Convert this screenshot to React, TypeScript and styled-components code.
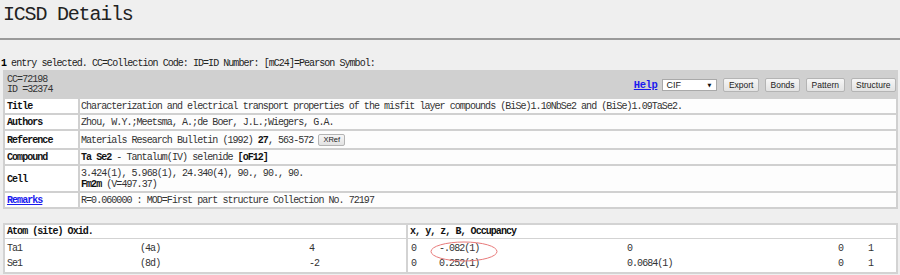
import React from 'react';
import styled, { createGlobalStyle } from 'styled-components';

const GlobalStyle = createGlobalStyle`
  body {
    margin: 0;
    background: #efefef;
    color: #2a2a2a;
    font-family: 'Liberation Mono', 'DejaVu Sans Mono', monospace;
    font-size: 10px;
    letter-spacing: -0.95px;
  }
`;

const PageTitle = styled.h1`
  margin: 0;
  height: 38px;
  box-sizing: border-box;
  padding: 4px 3px 0;
  font-size: 20px;
  line-height: 22px;
  font-weight: normal;
  letter-spacing: -1.2px;
  color: #222;
`;

const Rule = styled.div`
  height: 2px;
  background: #9a9a9a;
`;

const Summary = styled.div`
  margin: 18px 1px 0;
  line-height: 12px;
  height: 12px;
  color: #222;

  b {
    color: #000;
  }
`;

const Panel = styled.div`
  margin: 0 2px 0 3px;
  display: grid;
  grid-template-columns: 73px 1fr;
  gap: 2px;
  padding: 2px;
  background: #d0d0d0;
`;

const PanelHeader = styled.div`
  grid-column: 1 / -1;
  height: 25px;
  display: flex;
  align-items: center;
  justify-content: space-between;
  padding-left: 2px;
`;

const IdBlock = styled.div`
  line-height: 10px;
  color: #333;
`;

const Toolbar = styled.div`
  display: flex;
  align-items: center;
  gap: 6px;
  padding-top: 1px;
`;

const HelpLink = styled.a`
  color: #1a1aee;
  font-weight: bold;
  font-size: 10.5px;
  letter-spacing: -0.4px;
  text-decoration: underline;
  margin-right: -1px;
`;

const FormatSelect = styled.span`
  position: relative;
  display: inline-block;
  width: 55px;
  height: 12px;
  box-sizing: border-box;
  border: 1px solid #a9a9a9;
  background: #fff;

  select {
    appearance: none;
    border: none;
    background: transparent;
    width: 100%;
    height: 100%;
    padding: 0 0 0 3px;
    margin: 0;
    font-family: 'Liberation Sans', Arial, sans-serif;
    font-size: 9px;
    line-height: 10px;
    letter-spacing: 0;
    color: #222;
    outline: none;
  }

  &::after {
    content: '▼';
    position: absolute;
    right: 5px;
    top: 2px;
    font-family: 'DejaVu Sans', sans-serif;
    font-size: 5px;
    line-height: 6px;
    letter-spacing: 0;
    color: #111;
    pointer-events: none;
  }
`;

const ToolButton = styled.button<{ $small?: boolean }>`
  height: ${(p) => (p.$small ? '12px' : '14px')};
  padding: 0 ${(p) => (p.$small ? '4px' : '4.5px')};
  border: 1px solid #b4b4b4;
  border-radius: 2px;
  background: linear-gradient(#f6f6f6, #e2e2e2);
  font-family: 'Liberation Sans', Arial, sans-serif;
  font-size: ${(p) => (p.$small ? '7.5px' : '8.5px')};
  letter-spacing: 0;
  color: #222;
  line-height: 1;
  cursor: pointer;
`;

const Label = styled.div`
  background: #fff;
  padding: 2px 2px 1px;
  line-height: 11px;
  font-weight: bold;
  color: #111;
  display: flex;
  align-items: center;
`;

const Value = styled.div<{ $tall?: boolean }>`
  background: #fdfdfd;
  padding: 2px 1px 1px;
  line-height: 11px;
  min-height: ${(p) => (p.$tall ? '14px' : '11px')};
  display: flex;
  flex-direction: column;
  justify-content: center;
  color: #333;

  b {
    color: #111;
  }
`;

const InlineRow = styled.span`
  display: flex;
  align-items: center;
  gap: 5px;
`;

const RemarksLink = styled.a`
  color: #1a1aee;
  text-decoration: underline;
  font-weight: bold;
`;

const AtomTable = styled.div`
  margin: 14px 2px 0 3px;
  display: grid;
  grid-template-columns: 401px 1fr;
  gap: 1px 2px;
  padding: 2px;
  background: #d3d3d3;
`;

const AtomHead = styled.div`
  background: #fff;
  line-height: 13px;
  height: 13px;
  padding: 0 2px;
  font-weight: bold;
  color: #111;
`;

const AtomBody = styled.div<{ $pad?: number }>`
  position: relative;
  background: #fff;
  padding: 2px 2px 1px ${(p) => p.$pad ?? 2}px;
  line-height: 15px;
  color: #333;
`;

const AtomRow = styled.div<{ $cols: string }>`
  display: grid;
  grid-template-columns: ${(p) => p.$cols};
`;

const Ellipse = styled.svg`
  position: absolute;
  left: 22px;
  top: 2px;
  width: 68px;
  height: 21px;
  pointer-events: none;
`;

const atoms = [
  { name: 'Ta1', site: '(4a)', oxid: '4', x: '0', y: '-.082(1)', z: '0', b: '0', occ: '1' },
  { name: 'Se1', site: '(8d)', oxid: '-2', x: '0', y: '0.252(1)', z: '0.0684(1)', b: '0', occ: '1' },
];

export default function App() {
  return (
    <>
      <GlobalStyle />
      <PageTitle>ICSD Details</PageTitle>
      <Rule />
      <Summary>
        <b>1</b> entry selected. CC=Collection Code: ID=ID Number: [mC24]=Pearson Symbol:
      </Summary>

      <Panel>
        <PanelHeader>
          <IdBlock>
            CC=72198
            <br />
            ID =32374
          </IdBlock>
          <Toolbar>
            <HelpLink href="#">Help</HelpLink>
            <FormatSelect>
              <select defaultValue="CIF">
                <option>CIF</option>
              </select>
            </FormatSelect>
            <ToolButton>Export</ToolButton>
            <ToolButton>Bonds</ToolButton>
            <ToolButton>Pattern</ToolButton>
            <ToolButton>Structure</ToolButton>
          </Toolbar>
        </PanelHeader>

        <Label>Title</Label>
        <Value>
          Characterization and electrical transport properties of the misfit layer compounds
          (BiSe)1.10NbSe2 and (BiSe)1.09TaSe2.
        </Value>

        <Label>Authors</Label>
        <Value>Zhou, W.Y.;Meetsma, A.;de Boer, J.L.;Wiegers, G.A.</Value>

        <Label>Reference</Label>
        <Value $tall>
          <InlineRow>
            <span>
              Materials Research Bulletin (1992) <b>27</b>, 563-572
            </span>
            <ToolButton $small>XRef</ToolButton>
          </InlineRow>
        </Value>

        <Label>Compound</Label>
        <Value>
          <span>
            <b>Ta Se2</b> - Tantalum(IV) selenide <b>[oF12]</b>
          </span>
        </Value>

        <Label>Cell</Label>
        <Value>
          <span>3.424(1), 5.968(1), 24.340(4), 90., 90., 90.</span>
          <span>
            <b>Fm2m</b> (V=497.37)
          </span>
        </Value>

        <Label>
          <RemarksLink href="#">Remarks</RemarksLink>
        </Label>
        <Value>R=0.060000 : MOD=First part structure Collection No. 72197</Value>
      </Panel>

      <AtomTable>
        <AtomHead>Atom (site) Oxid.</AtomHead>
        <AtomHead>x, y, z, B, Occupancy</AtomHead>
        <AtomBody>
          {atoms.map((a) => (
            <AtomRow key={a.name} $cols="133px 169px 1fr">
              <span>{a.name}</span>
              <span>{a.site}</span>
              <span>{a.oxid}</span>
            </AtomRow>
          ))}
        </AtomBody>
        <AtomBody $pad={3}>
          {atoms.map((a) => (
            <AtomRow key={a.name} $cols="28px 188px 211px 30px 1fr">
              <span>{a.x}</span>
              <span>{a.y}</span>
              <span>{a.z}</span>
              <span>{a.b}</span>
              <span>{a.occ}</span>
            </AtomRow>
          ))}
          <Ellipse viewBox="0 0 68 21">
            <ellipse cx="34" cy="10.5" rx="33" ry="9.5" fill="none" stroke="#e87a7a" strokeWidth="1" />
          </Ellipse>
        </AtomBody>
      </AtomTable>
    </>
  );
}
